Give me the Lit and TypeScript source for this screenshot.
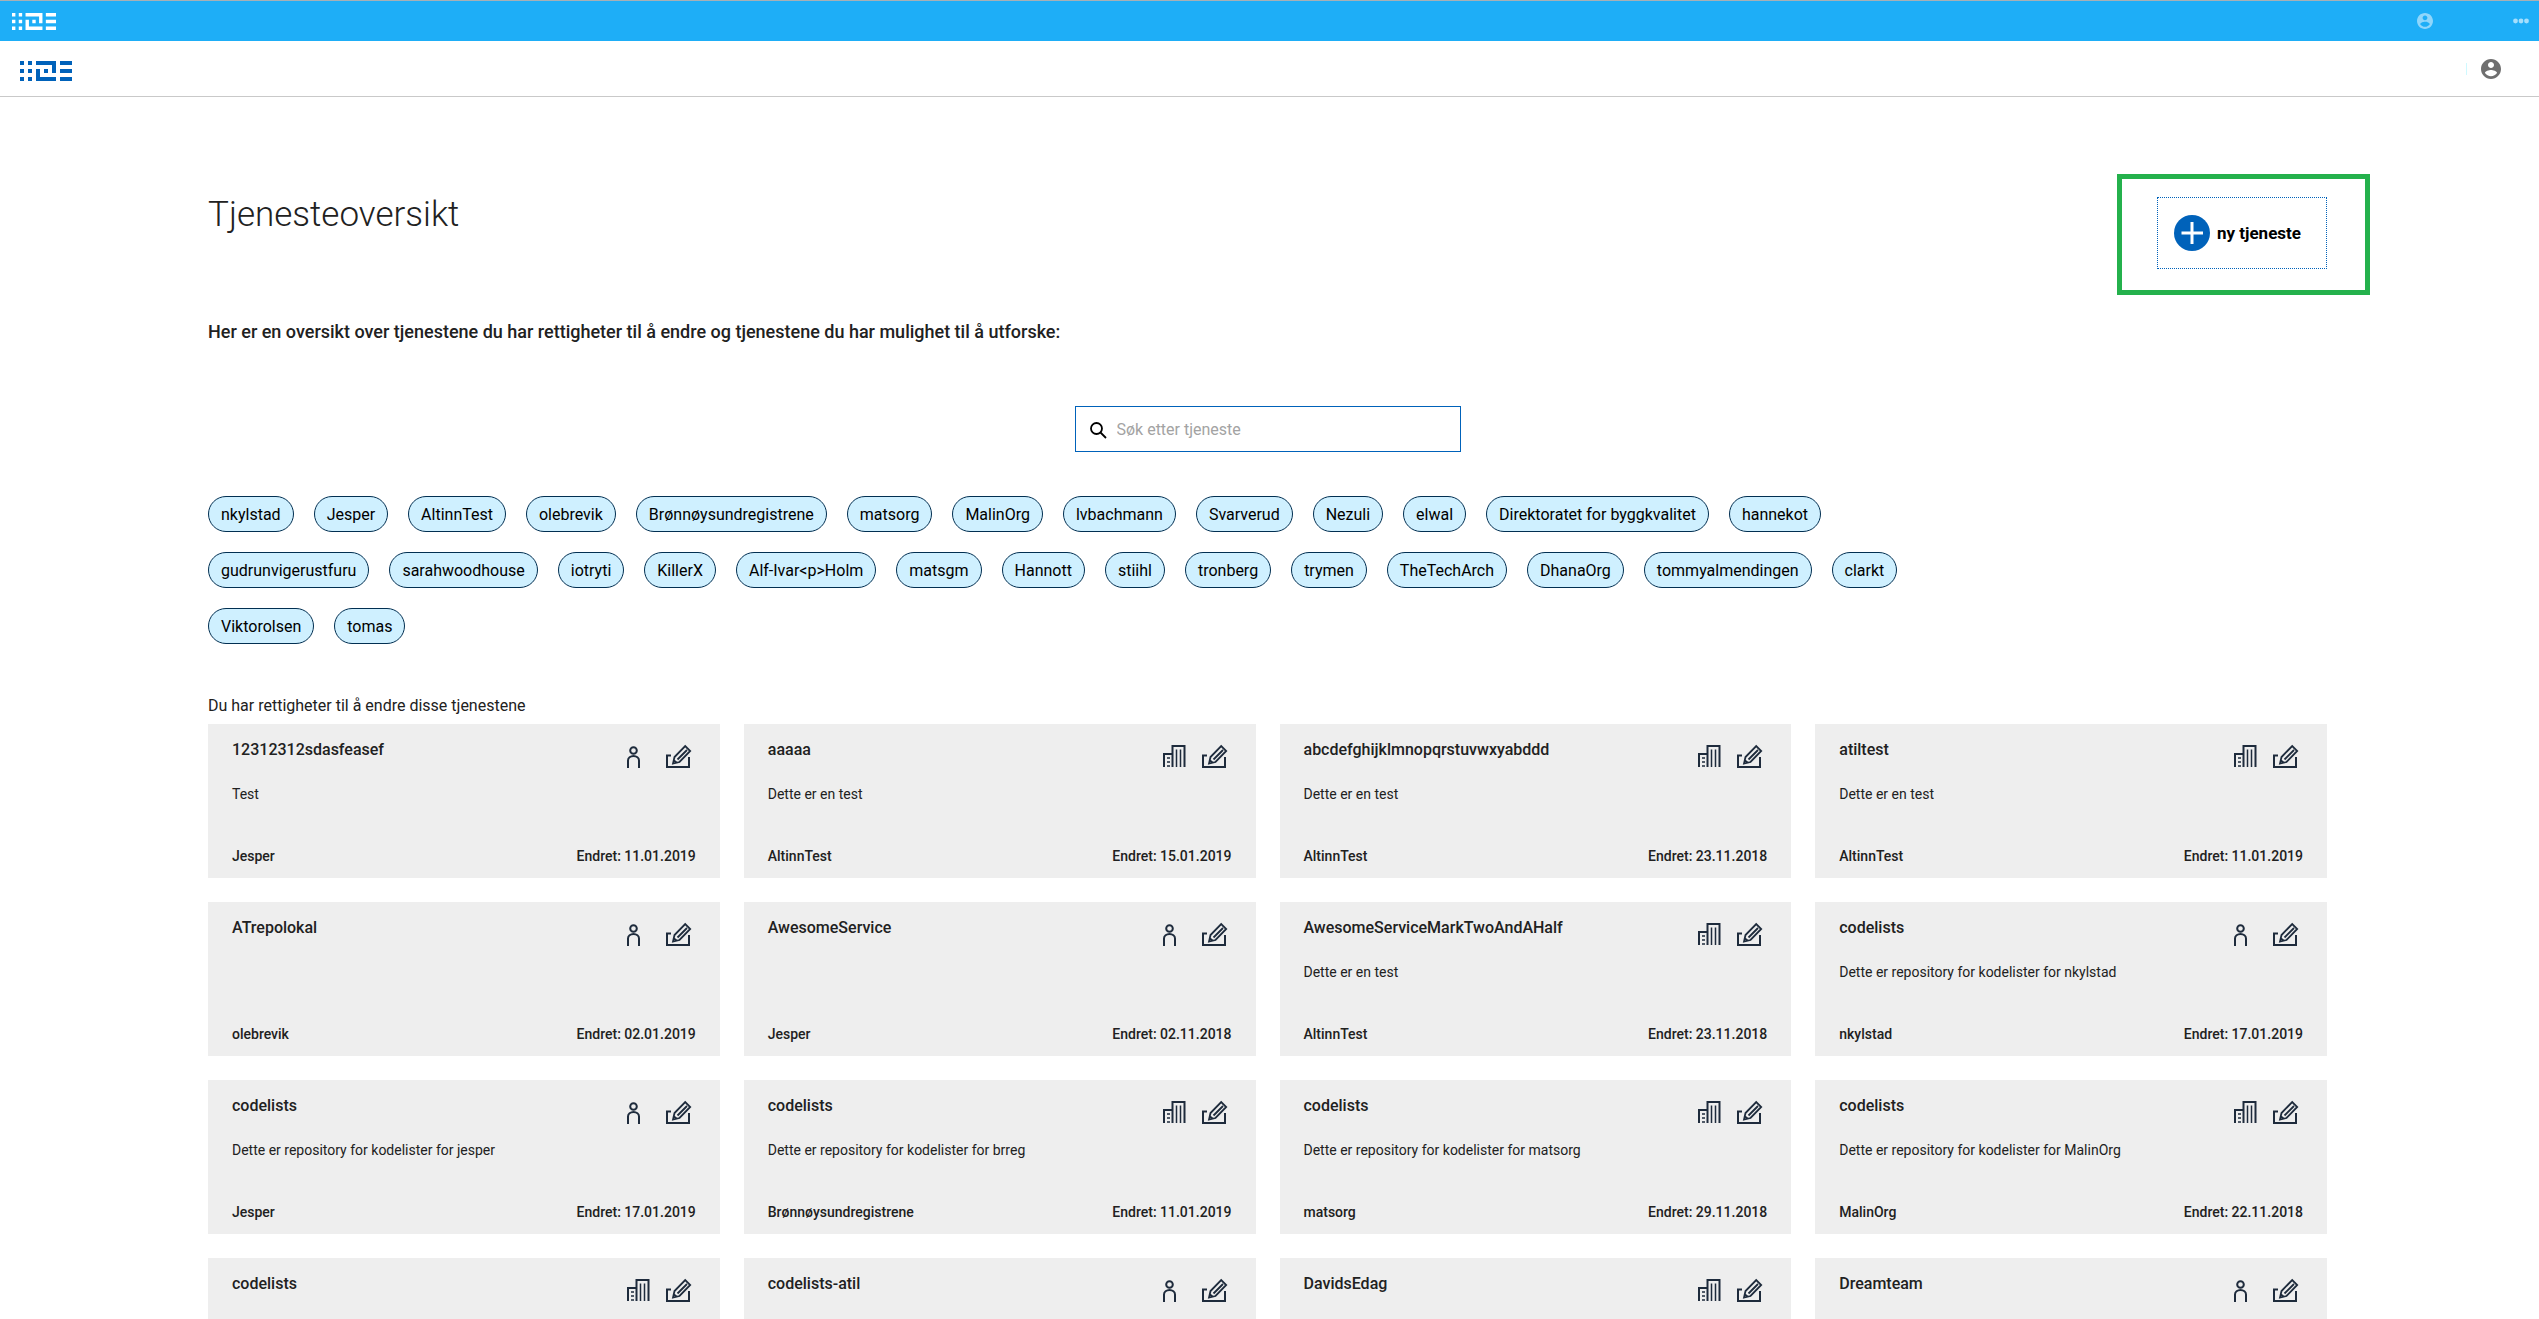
import { LitElement, html, css, svg, nothing } from "lit";
import { customElement, property } from "lit/decorators.js";

type Kind = "person" | "org";

interface Service {
  name: string;
  text: string;
  owner: string;
  date: string;
  kind: Kind;
}

const service = (name: string, text: string, owner: string, date: string, kind: Kind): Service => ({
  name,
  text,
  owner,
  date,
  kind,
});

const OWNERS = [
  "nkylstad", "Jesper", "AltinnTest", "olebrevik", "Brønnøysundregistrene", "matsorg", "MalinOrg",
  "lvbachmann", "Svarverud", "Nezuli", "elwal", "Direktoratet for byggkvalitet", "hannekot",
  "gudrunvigerustfuru", "sarahwoodhouse", "iotryti", "KillerX", "Alf-Ivar<p>Holm", "matsgm",
  "Hannott", "stiihl", "tronberg", "trymen", "TheTechArch", "DhanaOrg", "tommyalmendingen",
  "clarkt", "Viktorolsen", "tomas",
];

const SERVICES: Service[] = [
  service("12312312sdasfeasef", "Test", "Jesper", "11.01.2019", "person"),
  service("aaaaa", "Dette er en test", "AltinnTest", "15.01.2019", "org"),
  service("abcdefghijklmnopqrstuvwxyabddd", "Dette er en test", "AltinnTest", "23.11.2018", "org"),
  service("atiltest", "Dette er en test", "AltinnTest", "11.01.2019", "org"),
  service("ATrepolokal", "", "olebrevik", "02.01.2019", "person"),
  service("AwesomeService", "", "Jesper", "02.11.2018", "person"),
  service("AwesomeServiceMarkTwoAndAHalf", "Dette er en test", "AltinnTest", "23.11.2018", "org"),
  service("codelists", "Dette er repository for kodelister for nkylstad", "nkylstad", "17.01.2019", "person"),
  service("codelists", "Dette er repository for kodelister for jesper", "Jesper", "17.01.2019", "person"),
  service("codelists", "Dette er repository for kodelister for brreg", "Brønnøysundregistrene", "11.01.2019", "org"),
  service("codelists", "Dette er repository for kodelister for matsorg", "matsorg", "29.11.2018", "org"),
  service("codelists", "Dette er repository for kodelister for MalinOrg", "MalinOrg", "22.11.2018", "org"),
  service("codelists", "", "", "", "org"),
  service("codelists-atil", "", "", "", "person"),
  service("DavidsEdag", "", "", "", "org"),
  service("Dreamteam", "", "", "", "person"),
];

const logo = html`<svg class="logo" viewBox="0 0 13 5" aria-hidden="true">
  <path fill="currentColor" d="M0 0h1v1H0zM0 2h1v1H0zM0 4h1v1H0zM2 0h1v1H2zM2 2h1v1H2zM2 4h1v1H2zM4 0h5v3H8V1H4zM6 2h1v1H6zM4 2h1v2h4v1H4zM10 0h3v1h-3zM10 2h3v1h-3zM10 4h3v1h-3z"/>
</svg>`;

const account = html`<svg class="account" viewBox="2 2 20 20" aria-hidden="true">
  <path fill="currentColor" d="M12 2C6.480 2 2 6.480 2 12s4.480 10 10 10 10-4.480 10-10S17.520 2 12 2zm0 3c1.660 0 3 1.340 3 3s-1.340 3-3 3-3-1.340-3-3 1.340-3 3-3zm0 14.200c-2.500 0-4.710-1.280-6-3.220.03-1.990 4-3.080 6-3.080 1.990 0 5.970 1.090 6 3.080-1.290 1.940-3.500 3.220-6 3.220z"/>
</svg>`;

const kindShapes = {
  person: svg`<circle cx="9.500" cy="6.500" r="3.300"/><path d="M4 24v-7.500a5.500 4.500 0 0 1 11 0V24"/>`,
  org: svg`<path d="M4 23V10h8M12.500 23V2h12v21"/><path stroke-width="1.500" d="M16.500 5.500V23M20.500 5.500V23M7 14h3M7 18h3M7 22h3"/>`,
};

@customElement("service-card")
export class ServiceCard extends LitElement {
  @property({ attribute: false }) service!: Service;

  static styles = css`
    :host {
      display: block;
      min-width: 0;
    }
    .card {
      box-sizing: border-box;
      min-height: 154px;
      height: 100%;
      padding: 16px 24px 12px;
      display: flex;
      flex-direction: column;
      background: #eeeeee;
      color: #212121;
    }
    .head {
      display: flex;
      justify-content: space-between;
      height: 40px;
    }
    .name {
      margin: 0;
      font-size: 16px;
      line-height: 20px;
      font-weight: 500;
    }
    .icons {
      display: flex;
      gap: 16px;
      padding-top: 4px;
      margin-right: 4px;
    }
    .icon {
      width: 28px;
      height: 26px;
      margin-right: -2px;
      fill: none;
      stroke: #1e2b3c;
      stroke-width: 2;
    }
    .text {
      margin: 0;
      padding-top: 4px;
      font-size: 14px;
      line-height: 20px;
      flex: 1;
    }
    .foot {
      display: flex;
      justify-content: space-between;
      font-size: 14px;
      line-height: 20px;
      font-weight: 500;
    }
  `;

  render() {
    const s = this.service;
    return html`<article class="card">
      <div class="head">
        <h3 class="name">${s.name}</h3>
        <div class="icons">
          <svg class="icon" viewBox="0 0 28 26" aria-hidden="true">${kindShapes[s.kind]}</svg>
          <svg class="icon" viewBox="0 0 28 26" aria-hidden="true">
            <path d="M5 11.500H1v11.500h22V13"/>
            <path stroke-width="1.800" d="M7 19.600L8.500 13 19.200 2l5 5L13.500 18zM11.500 15.500L21 6M8 16.500l3 2.500"/>
          </svg>
        </div>
      </div>
      <p class="text">${s.text}</p>
      <div class="foot">
        <span>${s.owner}</span>
        ${s.date ? html`<span>Endret: ${s.date}</span>` : nothing}
      </div>
    </article>`;
  }
}

@customElement("app-root")
export class AppRoot extends LitElement {
  static styles = css`
    :host {
      display: block;
      height: 100vh;
      overflow: hidden;
      background: #ffffff;
      color: #212121;
      font-family: Roboto, "Liberation Sans", sans-serif;
      font-size: 16px;
    }
    button,
    input {
      font: inherit;
      color: inherit;
      margin: 0;
      padding: 0;
      border: 0;
      background: none;
    }
    .logo,
    .account {
      display: block;
    }
    .top {
      display: flex;
      align-items: center;
      height: 40px;
      padding: 0 10px 0 12px;
      border-top: 1px solid #a8b0b5;
      background: #1eaef7;
      color: #ffffff;
    }
    .top .logo {
      width: 44px;
      height: 17px;
    }
    .top .profile {
      margin-left: auto;
      margin-right: 80px;
      color: #8fd6fb;
    }
    .top .account {
      width: 16px;
      height: 16px;
    }
    .dots {
      display: block;
      width: 16px;
      height: 6px;
      color: #a5defc;
    }
    .bar {
      display: flex;
      align-items: center;
      height: 55px;
      padding: 0 38px 0 20px;
      border-bottom: 1px solid #c9c9c9;
      color: #0062ba;
    }
    .bar .logo {
      width: 52px;
      height: 20px;
      padding-top: 4px;
    }
    .bar .profile {
      margin-left: auto;
      color: #6f6f6f;
      display: flex;
      align-items: center;
    }
    .bar .profile::before {
      content: "";
      height: 12px;
      border-left: 1px solid #cff9ff;
      margin-right: 14px;
    }
    .bar .account {
      width: 20px;
      height: 20px;
    }
    .page {
      padding: 100px 212px 0 208px;
    }
    .heading {
      display: flex;
      justify-content: space-between;
      align-items: flex-start;
    }
    .title {
      margin: 0;
      font-size: 35px;
      line-height: 36px;
      font-weight: 300;
    }
    .create {
      position: relative;
      display: flex;
    }
    .new {
      display: flex;
      align-items: center;
      gap: 7px;
      height: 72px;
      padding: 0 25px 0 16px;
      border: 1px dotted #0062ba;
      color: #000000;
      font-size: 17px;
      font-weight: 700;
    }
    .plus {
      width: 36px;
      height: 36px;
    }
    .marker {
      position: absolute;
      inset: -23px -43px -26px -40px;
      border: 5px solid #24b14c;
      pointer-events: none;
    }
    .intro {
      margin: 53px 0 0;
      font-size: 18px;
      line-height: 20px;
      font-weight: 500;
    }
    .search {
      box-sizing: border-box;
      display: flex;
      align-items: center;
      gap: 10px;
      width: 386px;
      height: 46px;
      margin: 64px auto 0;
      padding: 0 14px;
      border: 1px solid #0062ba;
    }
    .lens {
      width: 17px;
      height: 17px;
      padding-top: 2px;
      flex: none;
    }
    .field {
      flex: 1;
      min-width: 0;
      outline: none;
      font-weight: 400;
    }
    .field::placeholder {
      color: #a3a3a3;
      opacity: 1;
    }
    .owners {
      display: flex;
      flex-wrap: wrap;
      gap: 20px;
      max-width: 83%;
      margin: 44px 0 0;
    }
    .owner {
      box-sizing: border-box;
      height: 36px;
      padding: 0 12px;
      border: 1px solid #022f51;
      border-radius: 18px;
      background: #cff0ff;
      color: #000000;
      white-space: nowrap;
    }
    .section {
      margin: 52px 0 8px;
      font-size: 16px;
      line-height: 20px;
      font-weight: 400;
    }
    .cards {
      display: grid;
      grid-template-columns: repeat(4, minmax(0, 1fr));
      gap: 24px;
    }
  `;

  render() {
    return html`
      <nav class="top" aria-label="Altinn">
        ${logo}
        <button class="profile" aria-label="Profil">${account}</button>
        <button aria-label="Meny">
          <svg class="dots" viewBox="0 0 16 6" fill="currentColor" aria-hidden="true">
            <circle cx="2.500" cy="3" r="2.400"/><circle cx="8" cy="3" r="2.400"/><circle cx="13.500" cy="3" r="2.400"/>
          </svg>
        </button>
      </nav>
      <header class="bar">
        ${logo}
        <button class="profile" aria-label="Profil">${account}</button>
      </header>
      <main class="page">
        <div class="heading">
          <h1 class="title">Tjenesteoversikt</h1>
          <div class="create">
            <button class="new">
              <svg class="plus" viewBox="0 0 36 36" aria-hidden="true">
                <circle cx="18" cy="18" r="18" fill="#0062ba"/>
                <path d="M18 7v22M7.500 18h21.500" stroke="#ffffff" stroke-width="3"/>
              </svg>
              ny tjeneste
            </button>
            <div class="marker"></div>
          </div>
        </div>
        <p class="intro">Her er en oversikt over tjenestene du har rettigheter til å endre og tjenestene du har mulighet til å utforske:</p>
        <label class="search">
          <svg class="lens" viewBox="0 0 17 17" fill="none" stroke="#000000" stroke-width="1.800" aria-hidden="true">
            <circle cx="6.500" cy="6.500" r="5.500"/><path d="M10.500 10.500l5.500 5.500"/>
          </svg>
          <input class="field" type="text" placeholder="Søk etter tjeneste" aria-label="Søk etter tjeneste" />
        </label>
        <div class="owners">${OWNERS.map((o) => html`<button class="owner">${o}</button>`)}</div>
        <h2 class="section">Du har rettigheter til å endre disse tjenestene</h2>
        <div class="cards">
          ${SERVICES.map((s) => html`<service-card .service=${s}></service-card>`)}
        </div>
      </main>
    `;
  }
}
